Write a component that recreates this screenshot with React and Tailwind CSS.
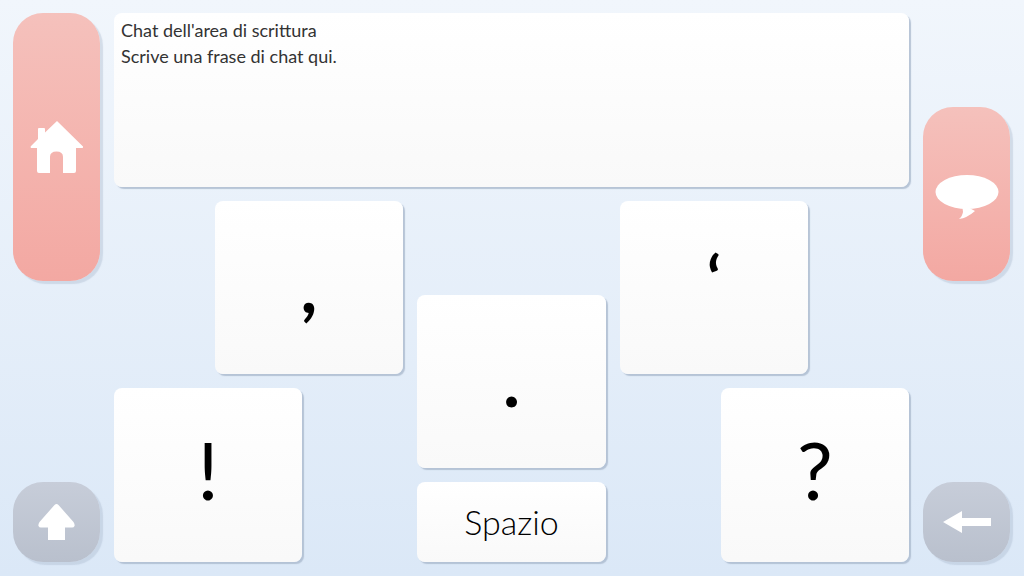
const font = { fontFamily: '"Lato", "Noto Sans", sans-serif' };

function SideButton({ className, children }) {
  return (
    <button className={`w-[87px] rounded-[30px] flex items-center justify-center ${className}`}>
      {children}
    </button>
  );
}

const pink = "bg-gradient-to-b from-[#f5c1bc] to-[#f3a8a2] shadow-[3px_3px_1px_rgba(170,185,205,0.4)]";
const gray = "bg-gradient-to-b from-[#c7cdd9] to-[#b9c0cd] shadow-[3px_3px_1px_rgba(170,185,205,0.4)]";

function Key({ className, children }) {
  return (
    <button className={`rounded-lg bg-gradient-to-b from-white to-[#f9f9f9] shadow-[2px_2px_1px_rgba(170,185,205,0.8)] flex items-center justify-center text-black ${className}`}>
      {children}
    </button>
  );
}

export default function App() {
  return (
    <div style={font} className="w-[1024px] h-[576px] overflow-hidden bg-gradient-to-b from-[#f1f6fc] to-[#dbe8f7] p-[13px] pr-[14px] pb-[14px] flex gap-[14px]">
      {/* left buttons */}
      <div className="w-[87px] flex flex-col justify-between">
        <SideButton className={`h-[268px] ${pink}`}>
          <svg width="54" height="54" viewBox="0 0 54 54" fill="#fff">
            <path d="M27 1 L53 26.500 Q53.500 28 52 28 L46 28 L46 51 Q46 53 44 53 L33 53 L33 37 Q33 31.500 26.500 31.500 Q20 31.500 20 37 L20 53 L9 53 Q7 53 7 51 L7 28 L1 28 Q0 27 1 26 L8 19 L8 9 Q8 8 9 8 L14 8 Q15 8 15 9 L15 12.500 Z" />
          </svg>
        </SideButton>
        <SideButton className={`h-[80px] ${gray}`}>
          <svg width="37" height="38" viewBox="0 0 37 38" fill="#fff">
            <path d="M18.500 1 Q17.500 1 16.500 2 L1.500 19 Q0 21.500 0.500 23 Q1 24.500 3 24.500 L10 24.500 L10 37 L27 37 L27 24.500 L34 24.500 Q36 24.500 36.500 23 Q37 21.500 35.500 19 L20.500 2 Q19.500 1 18.500 1 Z" />
          </svg>
        </SideButton>
      </div>

      {/* middle */}
      <div className="w-[795px] flex flex-col gap-[14px]">
        <div className="h-[174px] rounded-lg bg-gradient-to-b from-white to-[#f9f9f9] shadow-[2px_2px_1px_rgba(170,185,205,0.8)] px-[7px] py-[4px] text-[18px] leading-[26px] text-[#333]">
          <p>Chat dell'area di scrittura</p>
          <p>Scrive una frase di chat qui.</p>
        </div>

        <div className="grid grid-cols-[101px_87px_101px_14px_189px_14px_101px_87px_101px] grid-rows-[94px_79px_14px_80px_14px_80px]">
          <Key className="col-start-2 col-span-2 row-start-1 row-span-2 text-[72px] font-bold pb-[6px]">,</Key>
          <Key className="col-start-5 row-start-2 row-span-3 text-[72px] font-bold pb-[6px]">.</Key>
          <Key className="col-start-7 col-span-2 row-start-1 row-span-2 text-[64px] font-bold pb-[20px]">‘</Key>
          <Key className="col-start-1 col-span-2 row-start-4 row-span-3 text-[80px] pb-[12px]">!</Key>
          <Key className="col-start-8 col-span-2 row-start-4 row-span-3 text-[80px] pb-[12px]">?</Key>
          <Key className="col-start-5 row-start-6 text-[34px] font-light pb-[2px]">Spazio</Key>
        </div>
      </div>

      {/* right buttons */}
      <div className="w-[87px] flex flex-col">
        <SideButton className={`h-[174px] mt-[94px] ${pink}`}>
          <svg className="mt-[6px]" width="64" height="46" viewBox="0 0 64 46" fill="#fff">
            <ellipse cx="32" cy="18" rx="31.500" ry="17" />
            <path d="M27 30 L28 38 Q27 43 24 45 Q32 44 40 37 Z" />
          </svg>
        </SideButton>
        <SideButton className={`h-[80px] mt-auto ${gray}`}>
          <svg width="48" height="24" viewBox="0 0 48 24" fill="#fff">
            <path d="M0 12 L19 1 L19 8 L48 8 L48 16 L19 16 L19 23 Z" />
          </svg>
        </SideButton>
      </div>
    </div>
  );
}
